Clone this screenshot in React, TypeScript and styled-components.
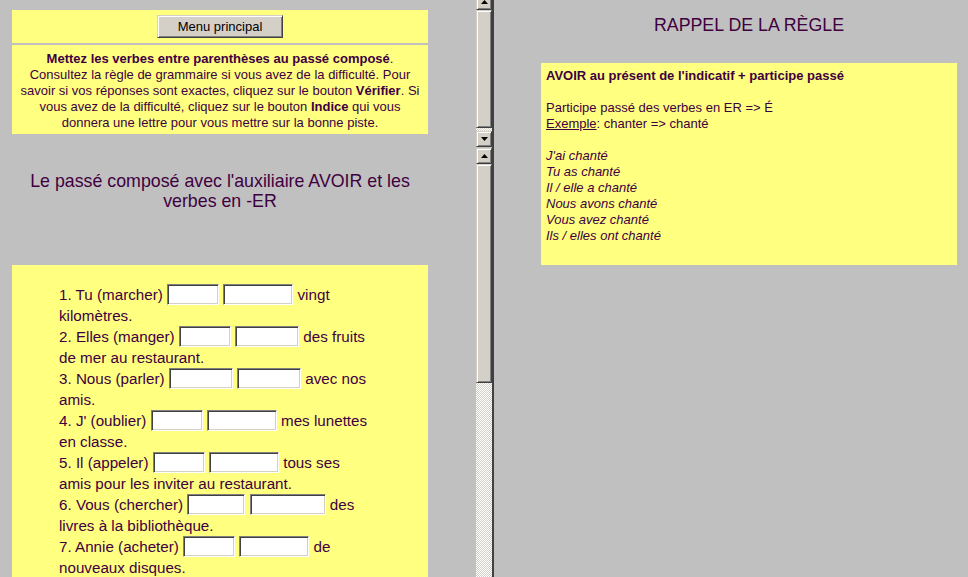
import styled, { createGlobalStyle, css } from "styled-components";

const INK = "#400040";
const PAPER = "#ffff80";
const FACE = "#d4d0c8";
const DESK = "#c0c0c0";

const GlobalStyle = createGlobalStyle`
  html, body {
    margin: 0;
    padding: 0;
    overflow: hidden;
  }
  body {
    background: ${DESK};
    font-family: "Liberation Sans", Arial, sans-serif;
  }
`;

const raised = css`
  box-sizing: border-box;
  background: ${FACE};
  border: 1px solid;
  border-color: ${FACE} #404040 #404040 ${FACE};
  box-shadow: inset 1px 1px #fff, inset -1px -1px #808080;
`;

const Screen = styled.div`
  display: flex;
  width: 968px;
  height: 577px;
  overflow: hidden;
  background: ${DESK};
  color: ${INK};
`;

const LeftColumn = styled.div`
  display: flex;
  flex-direction: column;
  gap: 1px;
  width: 492px;
  flex: none;
`;

const Frame = styled.div<{ $height?: number }>`
  display: flex;
  overflow: hidden;
  ${(p) => (p.$height ? `height: ${p.$height}px; flex: none;` : "flex: 1; min-height: 0;")}
`;

const FrameBody = styled.div`
  flex: 1;
  min-width: 0;
  overflow: hidden;
`;

const FrameDivider = styled.div`
  width: 2px;
  flex: none;
  background: #404040;
`;

/* scrollbars */
const ScrollBar = styled.div`
  display: flex;
  flex-direction: column;
  width: 16px;
  flex: none;
  overflow: hidden;
`;

const ArrowButton = styled.div<{ $clip?: number }>`
  ${raised}
  height: 16px;
  flex: none;
  display: flex;
  align-items: center;
  justify-content: center;
  margin-top: ${(p) => -(p.$clip ?? 0)}px;
`;

const Thumb = styled.div<{ $size: number }>`
  ${raised}
  height: ${(p) => p.$size}px;
  flex: none;
`;

const Track = styled.div<{ $size?: number }>`
  background: repeating-conic-gradient(#fff 0 25%, ${FACE} 0 50%) 0 0 / 2px 2px;
  ${(p) => (p.$size ? `height: ${p.$size}px; flex: none;` : "flex: 1;")}
`;

const Arrow = ({ down }: { down?: boolean }) => (
  <svg width="7" height="4" viewBox="0 0 7 4">
    <path d={down ? "M0 0H7L3.5 4Z" : "M0 4H7L3.5 0Z"} fill="#000" />
  </svg>
);

/* menu frame */
const Panel = styled.div`
  box-sizing: border-box;
  width: 416px;
  margin-left: 12px;
  background: ${PAPER};
`;

const MenuPanel = styled(Panel)`
  margin-top: 10px;
`;

const ButtonRow = styled.div`
  display: flex;
  justify-content: center;
  padding: 5px 0;
  border-bottom: 2px solid ${DESK};
`;

const MenuButton = styled.button`
  ${raised}
  width: 126px;
  height: 23px;
  padding: 0;
  font: 13px "Liberation Sans", Arial, sans-serif;
  color: #000;
`;

const Instructions = styled.p`
  margin: 0;
  padding: 6px 2px 3px;
  text-align: center;
  font-size: 13px;
  line-height: 16px;
`;

/* exercise frame */
const ExerciseBody = styled(FrameBody)`
  padding-top: 23px;
`;

const PageTitle = styled.h1`
  width: 416px;
  margin: 0 0 54px 12px;
  font-size: 17.8px;
  font-weight: normal;
  line-height: 20px;
  text-align: center;
`;

const ExercisePanel = styled(Panel)`
  padding: 19px 0 40px 47px;
  font-size: 15.2px;
`;

const Items = styled.ol`
  margin: 0;
  padding: 0;
  list-style: none;
`;

const ItemLine = styled.div`
  height: 21px;
  line-height: 21px;
  white-space: nowrap;
`;

const Blank = styled.input<{ $width: number }>`
  box-sizing: border-box;
  width: ${(p) => p.$width}px;
  height: 21px;
  margin: 0;
  padding: 0 2px;
  vertical-align: top;
  background: #fff;
  border: 1px solid;
  border-color: #808080 #fff #fff #808080;
  box-shadow: inset 1px 1px #404040, inset -1px -1px ${FACE};
  font: 13px "Liberation Sans", Arial, sans-serif;
  outline: none;
`;

/* rule frame */
const RuleFrame = styled.div`
  flex: 1;
  min-width: 0;
  padding-left: 47px;
  overflow: hidden;
`;

const RuleTitle = styled.h2`
  width: 416px;
  margin: 15px 0 28px;
  font-size: 17.8px;
  font-weight: normal;
  line-height: 20px;
  text-align: center;
`;

const RulePanel = styled.div`
  box-sizing: border-box;
  width: 416px;
  padding: 5px 5px 21px;
  background: ${PAPER};
  font-size: 13px;
  line-height: 16px;
`;

const RuleHeading = styled.div`
  font-weight: bold;
`;

const RuleText = styled.p`
  margin: 16px 0 0;
`;

const Underlined = styled.span`
  text-decoration: underline;
`;

const Conjugation = styled.ul`
  margin: 16px 0 0;
  padding: 0;
  list-style: none;
  font-style: italic;
`;

const exercises = [
  { lead: "1. Tu (marcher)", widths: [52, 70], tail: "vingt", rest: "kilomètres." },
  { lead: "2. Elles (manger)", widths: [52, 64], tail: "des fruits", rest: "de mer au restaurant." },
  { lead: "3. Nous (parler)", widths: [64, 64], tail: "avec nos", rest: "amis." },
  { lead: "4. J' (oublier)", widths: [52, 70], tail: "mes lunettes", rest: "en classe." },
  { lead: "5. Il (appeler)", widths: [52, 70], tail: "tous ses", rest: "amis pour les inviter au restaurant." },
  { lead: "6. Vous (chercher)", widths: [58, 76], tail: "des", rest: "livres à la bibliothèque." },
  { lead: "7. Annie (acheter)", widths: [52, 70], tail: "de", rest: "nouveaux disques." },
];

const conjugation = [
  "J'ai chanté",
  "Tu as chanté",
  "Il / elle a chanté",
  "Nous avons chanté",
  "Vous avez chanté",
  "Ils / elles ont chanté",
];

export default function App() {
  return (
    <>
      <GlobalStyle />
      <Screen>
        <LeftColumn>
          <Frame $height={147}>
            <FrameBody>
              <MenuPanel>
                <ButtonRow>
                  <MenuButton>Menu principal</MenuButton>
                </ButtonRow>
                <Instructions>
                  <b>Mettez les verbes entre parenthèses au passé composé</b>.
                  <br />
                  Consultez la règle de grammaire si vous avez de la difficulté. Pour savoir si vos
                  réponses sont exactes, cliquez sur le bouton <b>Vérifier</b>. Si vous avez de la
                  difficulté, cliquez sur le bouton <b>Indice</b> qui vous donnera une lettre pour
                  vous mettre sur la bonne piste.
                </Instructions>
              </MenuPanel>
            </FrameBody>
            <ScrollBar>
              <ArrowButton $clip={6}>
                <Arrow />
              </ArrowButton>
              <Thumb $size={118} />
              <Track $size={3} />
              <ArrowButton>
                <Arrow down />
              </ArrowButton>
            </ScrollBar>
          </Frame>

          <Frame>
            <ExerciseBody>
              <PageTitle>Le passé composé avec l'auxiliaire AVOIR et les verbes en -ER</PageTitle>
              <ExercisePanel>
                <Items>
                  {exercises.map((ex) => (
                    <li key={ex.lead}>
                      <ItemLine>
                        {ex.lead} <Blank $width={ex.widths[0]} /> <Blank $width={ex.widths[1]} />{" "}
                        {ex.tail}
                      </ItemLine>
                      <ItemLine>{ex.rest}</ItemLine>
                    </li>
                  ))}
                </Items>
              </ExercisePanel>
            </ExerciseBody>
            <ScrollBar>
              <ArrowButton>
                <Arrow />
              </ArrowButton>
              <Thumb $size={219} />
              <Track />
            </ScrollBar>
          </Frame>
        </LeftColumn>

        <FrameDivider />

        <RuleFrame>
          <RuleTitle>RAPPEL DE LA RÈGLE</RuleTitle>
          <RulePanel>
            <RuleHeading>AVOIR au présent de l'indicatif + participe passé</RuleHeading>
            <RuleText>
              Participe passé des verbes en ER =&gt; É
              <br />
              <Underlined>Exemple</Underlined>: chanter =&gt; chanté
            </RuleText>
            <Conjugation>
              {conjugation.map((line) => (
                <li key={line}>{line}</li>
              ))}
            </Conjugation>
          </RulePanel>
        </RuleFrame>
      </Screen>
    </>
  );
}
